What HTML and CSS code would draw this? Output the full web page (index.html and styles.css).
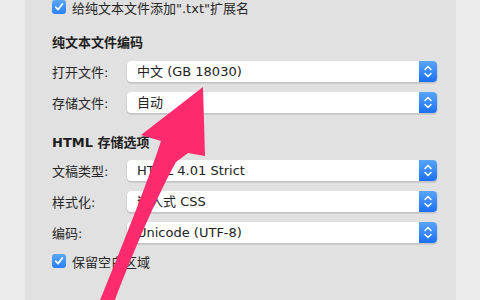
FILE: index.html
```html
<!DOCTYPE html>
<html lang="zh-CN">
<head>
  <meta charset="UTF-8">
  <title>纯文本与 HTML 存储选项</title>
  <link rel="stylesheet" href="styles.css">
</head>
<body>
  <div class="panel">
    <label class="check first">
      <span class="box"><svg width="10" height="10" viewBox="0 0 10 10"><polyline points="1.8,5.2 4,7.6 8.4,2" fill="none" stroke="#fff" stroke-width="1.7" stroke-linecap="round" stroke-linejoin="round"/></svg></span>
      给纯文本文件添加".txt"扩展名
    </label>

    <h2 class="group">纯文本文件编码</h2>
    <div class="row">
      <span class="label">打开文件:</span>
      <div class="popup"><span class="value">中文 (GB 18030)</span><span class="arrows"></span></div>
    </div>
    <div class="row">
      <span class="label">存储文件:</span>
      <div class="popup"><span class="value">自动</span><span class="arrows"></span></div>
    </div>

    <h2 class="group second">HTML 存储选项</h2>
    <div class="row">
      <span class="label">文稿类型:</span>
      <div class="popup"><span class="value">HTML 4.01 Strict</span><span class="arrows"></span></div>
    </div>
    <div class="row">
      <span class="label">样式化:</span>
      <div class="popup"><span class="value">嵌入式 CSS</span><span class="arrows"></span></div>
    </div>
    <div class="row">
      <span class="label">编码:</span>
      <div class="popup"><span class="value">Unicode (UTF-8)</span><span class="arrows"></span></div>
    </div>

    <label class="check last">
      <span class="box"><svg width="10" height="10" viewBox="0 0 10 10"><polyline points="1.8,5.2 4,7.6 8.4,2" fill="none" stroke="#fff" stroke-width="1.7" stroke-linecap="round" stroke-linejoin="round"/></svg></span>
      保留空白区域
    </label>
  </div>

  <svg class="pointer" width="480" height="300" viewBox="0 0 480 300">
    <path d="M203 87 L141 135 L161 141 C150 175 125 240 98 305 L113 305 C130 260 155 200 176 162 L188 153 L205 156 Z" fill="#fd2b6d"/>
  </svg>

  <script>
    // chevrons for every popup button
    document.querySelectorAll('.arrows').forEach(function (a) {
      a.innerHTML = '<svg width="18" height="21" viewBox="0 0 18 21">' +
        '<polyline points="6,8.5 9,5.5 12,8.5" fill="none" stroke="#fff" stroke-width="1.5" stroke-linecap="round" stroke-linejoin="round"/>' +
        '<polyline points="6,12.5 9,15.5 12,12.5" fill="none" stroke="#fff" stroke-width="1.5" stroke-linecap="round" stroke-linejoin="round"/>' +
        '</svg>';
    });
  </script>
</body>
</html>
```

FILE: styles.css
```css
body {
  margin: 0;
  background-color: #ebebeb;
  font-family: "DejaVu Sans", "Noto Sans CJK SC", sans-serif;
  font-size: 13px;
  color: #262626;
  overflow: hidden;
  height: 300px;
}

.panel {
  margin-left: 25px;
  width: 431px;
  height: 300px;
  box-sizing: border-box;
  padding: 0 19px 0 27px;
  background-color: #e1e1e1;
}

.check {
  display: flex;
  align-items: center;
  height: 14px;
  gap: 6px;
}

.check.first {
  margin-top: 0;
}

.check.last {
  margin-top: 11px;
}

.box {
  width: 14px;
  height: 14px;
  border-radius: 3px;
  background: linear-gradient(#5aa6fb, #2a7ff6);
  display: flex;
  align-items: center;
  justify-content: center;
  flex-shrink: 0;
}

.group {
  margin: 21px 0 10px;
  height: 16px;
  line-height: 16px;
  font-size: 13px;
  font-weight: bold;
  color: #1e1e1e;
}

.group.second {
  margin-top: 22px;
  margin-bottom: 9px;
}

.row {
  display: flex;
  align-items: center;
  height: 21px;
  margin-bottom: 10px;
}

.row:last-of-type {
  margin-bottom: 0;
}

.label {
  width: 75px;
  flex-shrink: 0;
}

.popup {
  flex: 1;
  height: 21px;
  display: flex;
  background-color: #fff;
  border-radius: 4px;
  box-shadow: 0 0.5px 0 0.5px #c4c4c4, 0 1.5px 0 #b8b8b8;
  overflow: hidden;
}

.value {
  flex: 1;
  padding-left: 10px;
  line-height: 21px;
  color: #222;
}

.arrows {
  width: 18px;
  height: 21px;
  background: linear-gradient(#58a5fc, #1b70f4);
}

.arrows svg {
  display: block;
}

.pointer {
  position: absolute;
  left: 0;
  top: 0;
}
```
